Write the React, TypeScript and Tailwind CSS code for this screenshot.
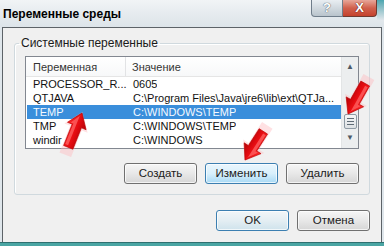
import React from "react";

type Row = { name: string; value: string; selected?: boolean };

const rows: Row[] = [
  { name: "PROCESSOR_R...", value: "0605" },
  { name: "QTJAVA", value: "C:\\Program Files\\Java\\jre6\\lib\\ext\\QTJa..." },
  { name: "TEMP", value: "C:\\WINDOWS\\TEMP", selected: true },
  { name: "TMP", value: "C:\\WINDOWS\\TEMP" },
  { name: "windir", value: "C:\\WINDOWS" },
];

function DialogButton({ label, variant = "normal" }: { label: string; variant?: "normal" | "hot" | "default" }) {
  const styles = {
    normal: "border-[#707070] bg-gradient-to-b from-[#f6f6f6] via-[#e8e8e8] to-[#d6d6d6]",
    hot: "border-[#3c7fb1] bg-gradient-to-b from-[#eaf6fd] via-[#d9f0fc] to-[#a7d9f5]",
    default: "border-[#3c7fb1] bg-gradient-to-b from-[#f2f6f8] via-[#e4eef3] to-[#cfe3ec]",
  };
  return (
    <div
      className={`w-[73px] h-[21px] rounded-[3px] border flex items-center justify-center text-[11.5px] text-[#1a1a1a] shadow-[inset_0_0_0_1px_rgba(255,255,255,0.7)] ${styles[variant]}`}
    >
      {label}
    </div>
  );
}

function Arrow({ x, y, angle, len = 37 }: { x: number; y: number; angle: number; len?: number }) {
  const pts = `0,0 10,14 5,14 5,${len} -5,${len} -5,14 -10,14`;
  return (
    <g transform={`translate(${x},${y}) rotate(${angle})`}>
      <polygon points={pts} fill="#ffb3b8" opacity="0.4" transform="scale(1.25) translate(0,-1)" />
      <polygon points={pts} fill="url(#arrowFill)" stroke="#b80000" strokeWidth="0.6" />
      <polygon points={`0,2 -7,13 -4,13 -4,${len - 2} -1,${len - 2} -1,13 -1,3`} fill="#ff6a6a" opacity="0.7" />
    </g>
  );
}

export default function App() {
  return (
    <div className="relative w-[384px] h-[246px] overflow-hidden flex flex-col bg-[#dfe6eb] font-['Liberation_Sans',Arial,sans-serif]">
      {/* title bar */}
      <div className="h-[27px] shrink-0 flex items-start bg-gradient-to-b from-[#f1f4f6] via-[#e6ebef] to-[#dde4e9]">
        <div className="pl-[3px] pt-[8px] text-[12px] font-bold text-black leading-none">Переменные среды</div>
        <div className="ml-auto flex">
          <div className="w-[32px] h-[17px] border border-t-0 border-[#6f7d8a] rounded-bl-[4px] bg-gradient-to-b from-[#e9eef2] to-[#b9c4cc] flex items-center justify-center text-[13px] font-bold text-white [text-shadow:0_0_1px_#55606a,0_0_1px_#55606a]">
            ?
          </div>
          <div className="w-[34px] h-[17px] border border-t-0 border-l-0 border-[#6f3a30] rounded-br-[4px] bg-gradient-to-b from-[#e7a79a] via-[#d0604d] to-[#c4412c] flex items-center justify-center text-[13px] font-bold text-white [text-shadow:0_0_1px_#5a1a10,0_0_1px_#5a1a10]">
            X
          </div>
          <div className="w-[7px] h-[20px] bg-gradient-to-b from-[#4aa6b0] to-[#dfe6eb]" />
        </div>
      </div>

      {/* client area */}
      <div className="flex-1 mx-[2px] border border-b-0 border-[#5d6368] bg-[#f0f0f0] flex flex-col px-[11px] pt-[8px]">
        <fieldset className="border border-[#d0d9de] rounded-[3px] shadow-[inset_1px_1px_0_#fff] px-[10px] pb-[10px] h-[159px]">
          <legend className="-ml-[6px] px-[2px] text-[12px] text-[#1a1a1a] leading-[14px]">Системные переменные</legend>

          {/* list */}
          <div className="mt-[6px] h-[93px] border border-[#828790] bg-white flex text-[11px] text-[#111] leading-[14px]">
            <div className="flex-1 flex flex-col">
              <div className="h-[20px] flex items-center border-b border-[#e5e5e5] text-[#333] bg-gradient-to-b from-white to-[#f7f8f9]">
                <div className="w-[100px] pl-[7px] border-r border-[#e2e3e5] h-full flex items-center">Переменная</div>
                <div className="pl-[6px]">Значение</div>
              </div>
              {rows.map((r) => (
                <div
                  key={r.name}
                  className={`h-[14px] flex ml-[1px] ${r.selected ? "bg-[#3a8edb] text-[#f4f9ff]" : ""}`}
                >
                  <div className="w-[99px] pl-[6px] whitespace-nowrap">{r.name}</div>
                  <div className="pl-[7px] whitespace-nowrap overflow-hidden">{r.value}</div>
                </div>
              ))}
            </div>
            {/* scrollbar */}
            <div className="w-[17px] bg-[#eceeef] border-l border-[#e3e5e6] flex flex-col items-center py-[6px]">
              <div className="text-[8px] text-[#4d5a66] leading-none">▲</div>
              <div className="mt-[43px] w-[13px] h-[15px] border border-[#8e9aa4] rounded-[2px] bg-gradient-to-b from-[#f5f6f7] to-[#dde1e4] flex flex-col items-center justify-center gap-[2px]">
                <div className="w-[7px] h-px bg-[#5f6b75]" />
                <div className="w-[7px] h-px bg-[#5f6b75]" />
                <div className="w-[7px] h-px bg-[#5f6b75]" />
              </div>
              <div className="mt-auto text-[8px] text-[#4d5a66] leading-none">▼</div>
            </div>
          </div>

          <div className="mt-[14px] flex justify-end gap-[8px]">
            <DialogButton label="Создать" />
            <DialogButton label="Изменить" variant="hot" />
            <DialogButton label="Удалить" />
          </div>
        </fieldset>

        <div className="mt-[15px] flex justify-end gap-[8px]">
          <DialogButton label="OK" variant="default" />
          <DialogButton label="Отмена" />
        </div>
      </div>

      <div className="h-[4px] shrink-0 bg-[#4aa5a3] border-t border-[#2f6f70]" />

      {/* red annotation arrows */}
      <svg className="absolute inset-0 pointer-events-none" width="384" height="246">
        <defs>
          <linearGradient id="arrowFill" x1="0" y1="0" x2="1" y2="0">
            <stop offset="0" stopColor="#ff2a2a" />
            <stop offset="0.5" stopColor="#e80d12" />
            <stop offset="1" stopColor="#b30006" />
          </linearGradient>
        </defs>
        <Arrow x={82} y={113} angle={21.8} len={37} />
        <Arrow x={348} y={114} angle={209.5} len={35} />
        <Arrow x={245} y={160} angle={212.7} len={34} />
      </svg>
    </div>
  );
}
